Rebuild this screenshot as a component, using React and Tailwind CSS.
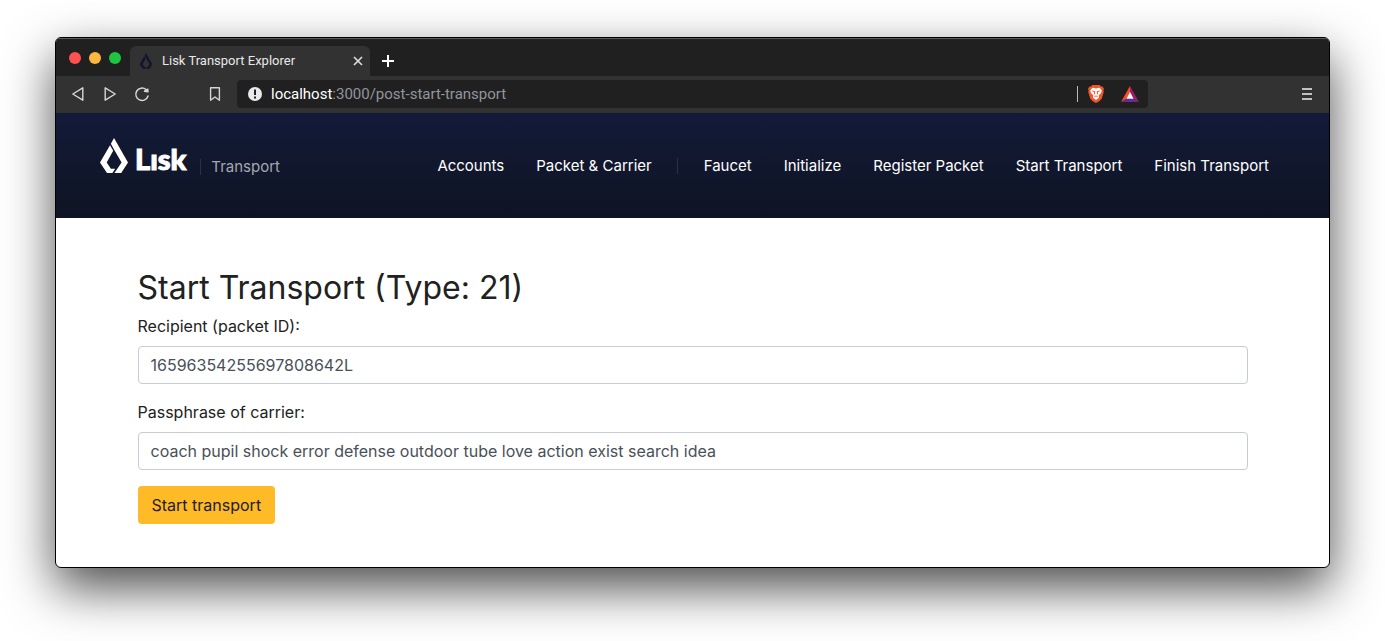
import React from "react";

const NAV_EXPLORE = ["Accounts", "Packet & Carrier"];
const NAV_ACTIONS = ["Faucet", "Initialize", "Register Packet", "Start Transport", "Finish Transport"];

function LiskMark({ className }) {
  return (
    <svg viewBox="0 0 28 35" className={className} fill="currentColor" aria-hidden="true">
      <path d="M14 0 L28 24.6 L21.2 35 H14.4 L21.6 24.6 L14 11.4 L10.9 5.8 Z" />
      <path d="M10 7.2 L13.2 12.8 L6.7 24.6 L10.9 30.8 H15.2 L12.4 35 H7 L0 24.6 Z" />
    </svg>
  );
}

function TabBar() {
  return (
    <div className="flex h-[37px] items-end bg-[#202020]">
      <div className="flex w-[74px] gap-2 self-center pl-[13px]">
        <button aria-label="Close window" className="size-3 rounded-full bg-[#ff5150]" />
        <button aria-label="Minimise window" className="size-3 rounded-full bg-[#fdb73e]" />
        <button aria-label="Zoom window" className="size-3 rounded-full bg-[#1dc540]" />
      </div>
      <div className="flex h-[30px] w-60 items-center rounded-t-md bg-[#323232] pr-[7px] pl-[9px]">
        <LiskMark className="h-4 w-[14px] shrink-0 text-[#11162e]" />
        <span className="ml-[9px] flex-1 truncate font-[Roboto] text-[13px] leading-4 text-[#e8e8e8]">
          Lisk Transport Explorer
        </span>
        <button aria-label="Close tab" className="text-[#e0e0e0]">
          <svg viewBox="0 0 10 10" className="size-[10px]" stroke="currentColor" strokeWidth="1.6">
            <path d="M1 1 L9 9 M9 1 L1 9" />
          </svg>
        </button>
      </div>
      <button aria-label="New tab" className="mb-[9px] ml-3 text-white">
        <svg viewBox="0 0 12 12" className="size-3" stroke="currentColor" strokeWidth="2">
          <path d="M6 0 V12 M0 6 H12" />
        </svg>
      </button>
    </div>
  );
}

function ToolIcon({ label, children }) {
  return (
    <button aria-label={label} className="block text-[#d6d6d6]">
      <svg viewBox="0 0 16 16" className="size-4" fill="none" stroke="currentColor" strokeWidth="1.4" strokeLinejoin="round" strokeLinecap="round">
        {children}
      </svg>
    </button>
  );
}

function Toolbar() {
  return (
    <div className="flex h-[37px] items-center bg-[#323232] pr-4 pb-px pl-[14px]">
      <div className="flex gap-4">
        <ToolIcon label="Back">
          <path d="M12.8 1.8 V14.2 L2.8 8 Z" />
        </ToolIcon>
        <ToolIcon label="Forward">
          <path d="M3.2 1.8 V14.2 L13.2 8 Z" />
        </ToolIcon>
        <ToolIcon label="Reload">
          <path d="M14 10 A6.2 6.2 0 1 1 12 3.5" strokeWidth="1.5" />
          <path d="M10.4 5.2 L13.8 3.2 L14 5.8 Z" fill="currentColor" />
        </ToolIcon>
      </div>
      <div className="ml-[57px]">
        <ToolIcon label="Bookmark this page">
          <path d="M3.6 1.8 H12.4 V14.2 L8 11 L3.6 14.2 Z" />
        </ToolIcon>
      </div>
      <div className="mr-[153px] ml-[14px] flex h-7 flex-1 items-center rounded bg-[#202020] pr-[9px] pl-[11px]">
        <svg viewBox="0 0 14 14" className="size-[14px] shrink-0" aria-hidden="true">
          <circle cx="7" cy="7" r="7" fill="#e8eaed" />
          <path d="M7 2.6 V8" stroke="#202020" strokeWidth="2" />
          <path d="M7 9.4 V11.4" stroke="#202020" strokeWidth="2" />
        </svg>
        <span className="ml-[9px] flex-1 truncate font-[Roboto] text-[15px] leading-5 text-[#91969c]">
          <span className="text-white">localhost</span>:3000/post-start-transport
        </span>
        <span className="mr-[10px] h-4 w-px bg-[#b8b8b8]" />
        <button aria-label="Brave Shields">
          <svg viewBox="0 0 16 18" className="h-[18px] w-4">
            <path d="M4.4 0 H11.6 L13 1.5 L14.8 1.7 L16 4 L15.4 5.5 L15.8 7 L13.6 14 L10.8 16.5 L8 18 L5.2 16.5 L2.4 14 L0.2 7 L0.6 5.5 L0 4 L1.2 1.7 L3 1.5 Z" fill="#f1562b" />
            <path d="M4.4 2.8 L8 3.4 L11.6 2.8 L13.8 5.6 L13 8 L10.6 10.6 L11.2 12.6 L8 15 L4.8 12.6 L5.4 10.6 L3 8 L2.2 5.6 Z" fill="#fff" />
            <path d="M4.2 6 L6.8 6.6 L6.4 9.4 M11.8 6 L9.2 6.6 L9.6 9.4 M6.4 11.8 L8 10.8 L9.6 11.8" fill="none" stroke="#f1562b" strokeWidth="1" />
          </svg>
        </button>
        <button aria-label="Brave Rewards" className="ml-[17px]">
          <svg viewBox="0 0 18 16" className="h-4 w-[18px]">
            <path d="M9 0 L0 16 L5.6 12.7 L9 6.4 Z" fill="#ff4a2b" />
            <path d="M9 0 L18 16 L12.4 12.7 L9 6.4 Z" fill="#9e1f63" />
            <path d="M0 16 H18 L12.4 12.7 H5.6 Z" fill="#662d91" />
            <path d="M9 6 L12.6 12.8 H5.4 Z" fill="#fff" />
          </svg>
        </button>
      </div>
      <button aria-label="Menu" className="text-[#c2c2c2]">
        <svg viewBox="0 0 12 12" className="size-3" stroke="currentColor" strokeWidth="2">
          <path d="M1 1 H11 M1 6 H11 M1 11 H11" />
        </svg>
      </button>
    </div>
  );
}

function NavLinks({ items }) {
  return items.map((item) => (
    <a key={item} href="#" className="whitespace-nowrap">
      {item}
    </a>
  ));
}

function SiteHeader() {
  return (
    <header className="flex h-[105px] justify-between bg-linear-to-b from-[#121a38] to-[#0f1423] pt-6 pr-[60px] pl-11">
      <a href="#" className="flex h-9 items-end">
        <LiskMark className="h-[35px] w-7 text-white" />
        <span className="ml-[7px] font-[Lato] text-[29px] leading-7 font-black text-white [-webkit-text-stroke:1px_white]">
          Lısk
        </span>
        <span className="mt-6 ml-[14px] flex h-4 items-center self-center border-l border-[#2a3049] pl-[10px] text-[15px] text-[#a5a7b0]">
          Transport
        </span>
      </a>
      <nav className="mt-[17px] flex h-6 items-center text-[15px] leading-6 text-white">
        <div className="flex gap-8">
          <NavLinks items={NAV_EXPLORE} />
        </div>
        <span className="mr-[26px] ml-[25px] h-4 w-px bg-[#2a3049]" />
        <div className="flex gap-8">
          <NavLinks items={NAV_ACTIONS} />
        </div>
      </nav>
    </header>
  );
}

function Field({ id, label, value }) {
  return (
    <div className="mb-4">
      <label htmlFor={id} className="mb-2 block text-[#212121]">
        {label}
      </label>
      <input
        id={id}
        type="text"
        defaultValue={value}
        className="block h-[38px] w-full rounded border border-[#c5ccd3] bg-white px-3 text-[#495057]"
      />
    </div>
  );
}

export default function App() {
  return (
    <div className="bg-white px-[55px] pt-[37px] pb-[73px] font-[Inter,sans-serif] text-base">
      <div className="overflow-hidden rounded-md border border-black bg-white shadow-[0_20px_50px_rgba(0,0,0,0.7)]">
        <div className="border-t border-[#5c5c5c] bg-[#202020]">
          <TabBar />
          <Toolbar />
        </div>
        <SiteHeader />
        <main className="mx-auto max-w-[1140px] px-[15px] pt-[50px] pb-[43px]">
          <h1 className="mb-[6px] text-[32px] leading-10 text-[#212121]">Start Transport (Type: 21)</h1>
          <form>
            <Field id="recipient" label="Recipient (packet ID):" value="16596354255697808642L" />
            <Field
              id="passphrase"
              label="Passphrase of carrier:"
              value="coach pupil shock error defense outdoor tube love action exist search idea"
            />
            <button type="button" className="h-[38px] rounded bg-[#ffba27] px-[14px] text-[#212121]">
              Start transport
            </button>
          </form>
        </main>
      </div>
    </div>
  );
}
